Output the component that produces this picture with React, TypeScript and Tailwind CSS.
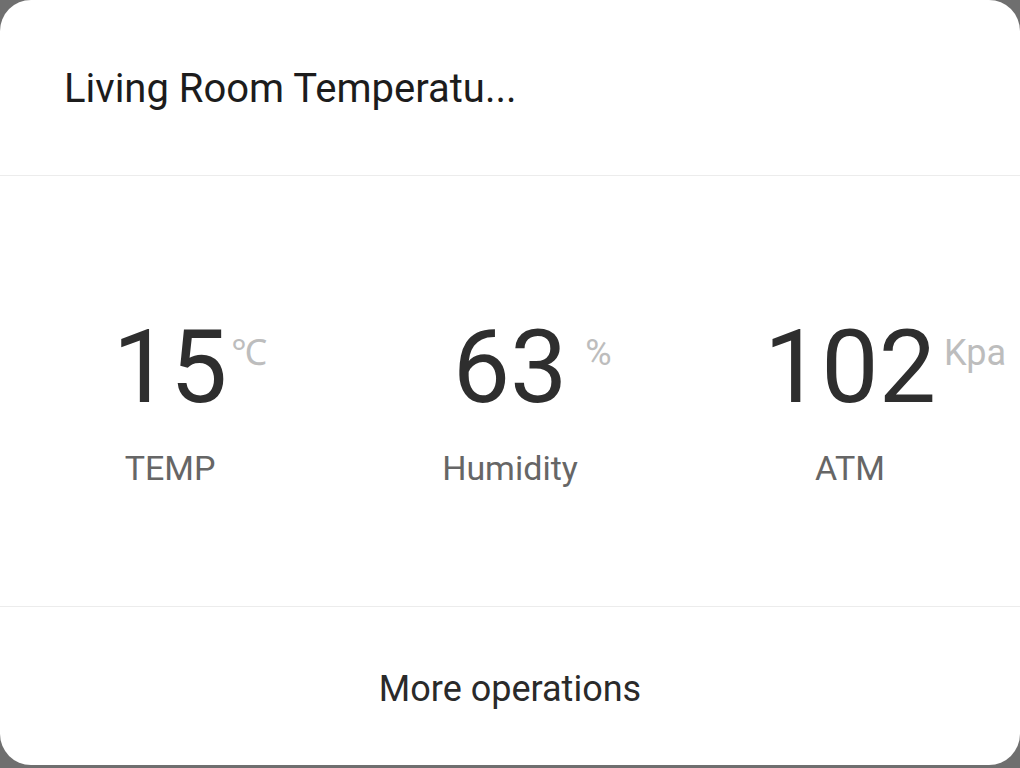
import React from "react";

const items = [
  { value: "15", unit: "℃", label: "TEMP", unitOffset: "ml-[4px]" },
  { value: "63", unit: "%", label: "Humidity", unitOffset: "ml-[18px]" },
  { value: "102", unit: "Kpa", label: "ATM", unitOffset: "ml-[8px]" },
];

export default function App() {
  return (
    <div
      className="w-[1020px] h-[768px] bg-[#6f6f6f] overflow-hidden"
      style={{ fontFamily: "Roboto, 'Noto Sans', sans-serif" }}
    >
      <div className="w-[1020px] h-[765px] bg-white rounded-[31px] flex flex-col">
        <div className="h-[176px] flex items-center pl-[64px] border-b border-[#ececec]">
          <span className="text-[40px] leading-none text-[#1c1c1c] pt-[2px]">
            Living Room Temperatu...
          </span>
        </div>
        <div className="h-[431px] border-b border-[#ececec] grid grid-cols-3 pt-[140px]">
          {items.map((it) => (
            <div key={it.label} className="flex flex-col items-center">
              <div className="relative leading-none">
                <span className="text-[102px] leading-none text-[#2e2e2e]">{it.value}</span>
                <span
                  className={`absolute left-full top-[19px] ${it.unitOffset} text-[36px] leading-none text-[#bdbdbd] whitespace-nowrap`}
                >
                  {it.unit}
                </span>
              </div>
              <div className="mt-[33px] text-[34px] leading-none text-[#666666]">{it.label}</div>
            </div>
          ))}
        </div>
        <div className="flex-1 flex justify-center pt-[64px]">
          <span className="text-[36px] leading-none text-[#2a2a2a]">More operations</span>
        </div>
      </div>
    </div>
  );
}
